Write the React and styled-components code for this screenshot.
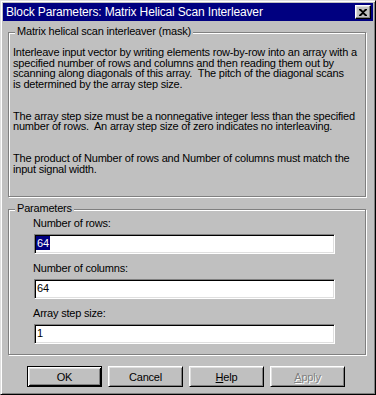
import React from 'react';
import styled, { createGlobalStyle } from 'styled-components';

const GlobalStyle = createGlobalStyle`
  html, body {
    margin: 0;
    padding: 0;
    background: #c0c0c0;
  }
  body {
    font-family: "Liberation Sans", Arial, sans-serif;
    font-size: 11px;
    letter-spacing: -0.2px;
    color: #000;
  }
  * {
    box-sizing: border-box;
  }
`;

const Window = styled.div`
  width: 376px;
  height: 395px;
  background: #c0c0c0;
  border: 1px solid;
  border-color: #dfdfdf #000 #000 #dfdfdf;
  box-shadow: inset 1px 1px 0 #fff, inset -1px -1px 0 #808080;
  padding: 2px;
  display: flex;
  flex-direction: column;
`;

const TitleBar = styled.div`
  height: 18px;
  background: #000080;
  display: flex;
  align-items: center;
  justify-content: space-between;
  padding: 0 2px 0 3px;
`;

const Title = styled.span`
  color: #fff;
  font-size: 12px;
  letter-spacing: -0.15px;
  line-height: 18px;
  white-space: nowrap;
`;

const CloseButton = styled.div`
  width: 16px;
  height: 14px;
  background: #c0c0c0;
  border: 1px solid;
  border-color: #fff #000 #000 #fff;
  box-shadow: inset -1px -1px 0 #808080, inset 1px 1px 0 #dfdfdf;
  display: flex;
  align-items: center;
  justify-content: center;
`;

const Body = styled.div`
  padding: 11px 7px 0 5px;
  display: flex;
  flex-direction: column;
`;

const Group = styled.div`
  position: relative;
  border: 1px solid #808080;
  box-shadow: inset 1px 1px 0 #fff, 1px 1px 0 #fff;
  margin-top: ${(p) => p.$gap || 0}px;
  padding: ${(p) => p.$pad};
`;

const Caption = styled.span`
  position: absolute;
  top: -8px;
  left: 6px;
  padding: 0 2px;
  background: #c0c0c0;
  line-height: 13px;
  white-space: nowrap;
`;

const Para = styled.p`
  margin: 0;
  line-height: 10.67px;
  white-space: nowrap;
  & + & {
    margin-top: 21px;
  }
`;

const Fields = styled.div`
  display: flex;
  flex-direction: column;
  gap: 7px;
`;

const Field = styled.div`
  display: flex;
  flex-direction: column;
  gap: 4px;
`;

const Label = styled.div`
  line-height: 14px;
`;

const TextBox = styled.div`
  margin-left: 1px;
  width: 301px;
  height: 20px;
  background: #fff;
  border: 1px solid;
  border-color: #808080 #fff #fff #808080;
  box-shadow: inset 1px 1px 0 #000, inset -1px -1px 0 #dfdfdf;
  padding: 1px 0 0 2px;
  line-height: 14px;
`;

const Selected = styled.span`
  background: #000080;
  color: #fff;
  margin-left: -1px;
  padding: 0 1px;
  display: inline-block;
`;

const ButtonRow = styled.div`
  margin-top: 11px;
  display: flex;
  justify-content: center;
  gap: 6px;
  padding-right: 2px;
`;

const Button = styled.div`
  width: 75px;
  height: 21px;
  background: #c0c0c0;
  display: flex;
  align-items: center;
  justify-content: center;
  border: 1px solid;
  border-color: ${(p) => (p.$default ? '#000' : '#fff #000 #000 #fff')};
  box-shadow: ${(p) =>
    p.$default
      ? 'inset 1px 1px 0 #fff, inset -1px -1px 0 #000, inset 2px 2px 0 #dfdfdf, inset -2px -2px 0 #808080'
      : 'inset 1px 1px 0 #dfdfdf, inset -1px -1px 0 #808080'};
  color: ${(p) => (p.$disabled ? '#808080' : '#000')};
  text-shadow: ${(p) => (p.$disabled ? '1px 1px 0 #fff' : 'none')};
  line-height: 14px;
  u {
    text-decoration: underline;
  }
`;

function CloseIcon() {
  return (
    <svg width="8" height="7" viewBox="0 0 8 7">
      <path d="M0 0h2l2 2 2-2h2v1L5 3.5 8 6v1H6L4 5 2 7H0V6l3-2.5L0 1z" fill="#000" />
    </svg>
  );
}

export default function App() {
  return (
    <>
      <GlobalStyle />
      <Window>
        <TitleBar>
          <Title>Block Parameters: Matrix Helical Scan Interleaver</Title>
          <CloseButton>
            <CloseIcon />
          </CloseButton>
        </TitleBar>
        <Body>
          <Group $pad="14px 8px 22px 4px">
            <Caption>Matrix helical scan interleaver (mask)</Caption>
            <Para>
              Interleave input vector by writing elements row-by-row into an array with a<br />
              specified number of rows and columns and then reading them out by<br />
              scanning along diagonals of this array.&nbsp; The pitch of the diagonal scans<br />
              is determined by the array step size.
            </Para>
            <Para>
              The array step size must be a nonnegative integer less than the specified<br />
              number of rows.&nbsp; An array step size of zero indicates no interleaving.
            </Para>
            <Para>
              The product of Number of rows and Number of columns must match the<br />
              input signal width.
            </Para>
          </Group>
          <Group $gap={12} $pad="6px 0 10px 24px">
            <Caption>Parameters</Caption>
            <Fields>
              <Field>
                <Label>Number of rows:</Label>
                <TextBox>
                  <Selected>64</Selected>
                </TextBox>
              </Field>
              <Field>
                <Label>Number of columns:</Label>
                <TextBox>64</TextBox>
              </Field>
              <Field>
                <Label>Array step size:</Label>
                <TextBox>1</TextBox>
              </Field>
            </Fields>
          </Group>
          <ButtonRow>
            <Button $default>OK</Button>
            <Button>Cancel</Button>
            <Button>
              <span><u>H</u>elp</span>
            </Button>
            <Button $disabled>
              <span><u>A</u>pply</span>
            </Button>
          </ButtonRow>
        </Body>
      </Window>
    </>
  );
}
